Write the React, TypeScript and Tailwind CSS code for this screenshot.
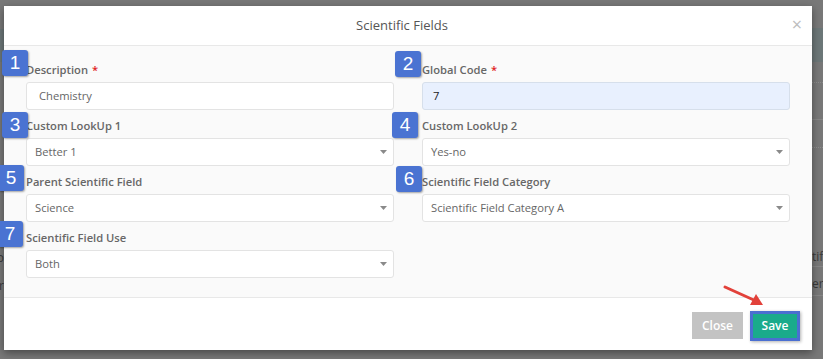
import type { ReactNode } from 'react';

const font = { fontFamily: '"Open Sans", "Liberation Sans", sans-serif' };

function Badge({ n, className }: { n: number; className: string }) {
  return (
    <div
      className={`absolute w-[26px] h-[26px] rounded-[3px] bg-[#4a73d2] text-white text-[19px] leading-[26px] text-center shadow-[1px_1px_2px_rgba(0,0,0,0.35)] ${className}`}
      style={{ fontFamily: '"Liberation Sans", Arial, sans-serif' }}
    >
      {n}
    </div>
  );
}

function Field({ label, required, children }: { label: string; required?: boolean; children: ReactNode }) {
  return (
    <div>
      <label className="block h-4 mb-1 text-[11.2px] leading-4 font-semibold text-[#676767]">
        {label}
        {required && <span className="ml-1 text-[#e02020]">*</span>}
      </label>
      {children}
    </div>
  );
}

function TextBox({ value, filled }: { value: string; filled?: boolean }) {
  return (
    <div
      className={`h-7 pl-3 flex items-center rounded-[3px] border text-[11.2px] ${
        filled ? 'pl-[10px] bg-[#e8f0fe] border-[#d6dfeb] text-[#222]' : 'bg-white border-[#e3e3e3] text-[#666]'
      }`}
    >
      {value}
    </div>
  );
}

function SelectBox({ value }: { value: string }) {
  return (
    <div className="h-7 pl-[8px] pr-[6px] flex items-center justify-between rounded-[3px] border border-[#e3e3e3] bg-white text-[11.2px] text-[#666]">
      <span>{value}</span>
      <svg width="7" height="4" viewBox="0 0 7 4">
        <polygon points="0,0 7,0 3.5,4" fill="#8a8a8a" />
      </svg>
    </div>
  );
}

export default function App() {
  return (
    <div className="relative w-[823px] h-[359px] overflow-hidden bg-[#787878]" style={font}>
      {/* page behind the overlay, only its edges show */}
      <div className="absolute inset-y-0 right-0 w-[11px] flex flex-col text-[12px] leading-4 text-[#3a3a3a]">
        <div className="h-[28px]" />
        <div className="h-[34px] bg-[#6c7778]" />
        <div className="h-[20px]" />
        <div className="h-[37px] border-t border-dotted border-[#8c8c8c]" />
        <div className="h-[28px] border-t border-[#868686]" />
        <div className="h-[119px] border-t border-dotted border-[#8c8c8c] flex items-end pb-[1px]">tific</div>
        <div className="h-[29px] border-t border-[#868686] pt-[9px]">er</div>
        <div className="border-t border-[#868686]" />
      </div>
      <div className="absolute inset-y-0 left-0 w-[4px] flex flex-col items-end text-[12px] text-[#3a3a3a]">
        <div className="h-[29px]" />
        <div className="h-[33px] w-full bg-[#6c7778]" />
        <div className="h-[188px]" />
        <div className="leading-4">o</div>
        <div className="h-[12px]" />
        <div className="leading-4">r</div>
      </div>

      <div className="relative pt-[6px] pl-[4px]">
        <div className="w-[808px] h-[344px] bg-white shadow-[0_3px_8px_rgba(0,0,0,0.4)] flex flex-col">
          <div className="relative h-10 flex items-center justify-center pr-3 border-b border-[#e8e8e8]">
            <h2 className="text-[13px] text-[#555]">Scientific Fields</h2>
            <span className="absolute right-[10px] top-[8px] text-[18px] leading-5 text-[#bdbdbd]">×</span>
          </div>

          <div className="flex-1 bg-[#fafafa] border-b border-[#e8e8e8] px-[22px] pt-4">
            <div className="grid grid-cols-2 gap-x-[28px] gap-y-2">
              <Field label="Description" required>
                <TextBox value="Chemistry" />
              </Field>
              <Field label="Global Code" required>
                <TextBox value="7" filled />
              </Field>
              <Field label="Custom LookUp 1">
                <SelectBox value="Better 1" />
              </Field>
              <Field label="Custom LookUp 2">
                <SelectBox value="Yes-no" />
              </Field>
              <Field label="Parent Scientific Field">
                <SelectBox value="Science" />
              </Field>
              <Field label="Scientific Field Category">
                <SelectBox value="Scientific Field Category A" />
              </Field>
              <Field label="Scientific Field Use">
                <SelectBox value="Both" />
              </Field>
            </div>
          </div>

          <div className="h-[52px] flex justify-end items-start gap-[7px] pt-[14px] pr-[12px]">
            <button className="h-[27px] w-[51px] bg-[#c3c3c3] text-white text-[12px] font-semibold">Close</button>
            <button className="h-[30px] -mt-px w-[50px] border-[3px] border-[#4a6fd1] bg-[#1aab8b] text-white text-[12px] font-semibold leading-none shadow-[1px_1px_3px_rgba(0,0,0,0.3)]">
              Save
            </button>
          </div>
        </div>
      </div>

      <svg className="absolute left-[720px] top-[282px]" width="50" height="30" viewBox="0 0 50 30">
        <line x1="5" y1="5" x2="36" y2="19" stroke="#e2413a" strokeWidth="3" strokeLinecap="round" />
        <polygon points="43,23 30,23 36,12" fill="#e2413a" />
      </svg>

      <Badge n={1} className="left-[2px] top-[50px]" />
      <Badge n={2} className="left-[395px] top-[51px]" />
      <Badge n={3} className="left-[2px] top-[112px]" />
      <Badge n={4} className="left-[392px] top-[112px]" />
      <Badge n={5} className="left-[-2px] top-[165px]" />
      <Badge n={6} className="left-[396px] top-[166px]" />
      <Badge n={7} className="left-[-3px] top-[221px]" />
    </div>
  );
}
